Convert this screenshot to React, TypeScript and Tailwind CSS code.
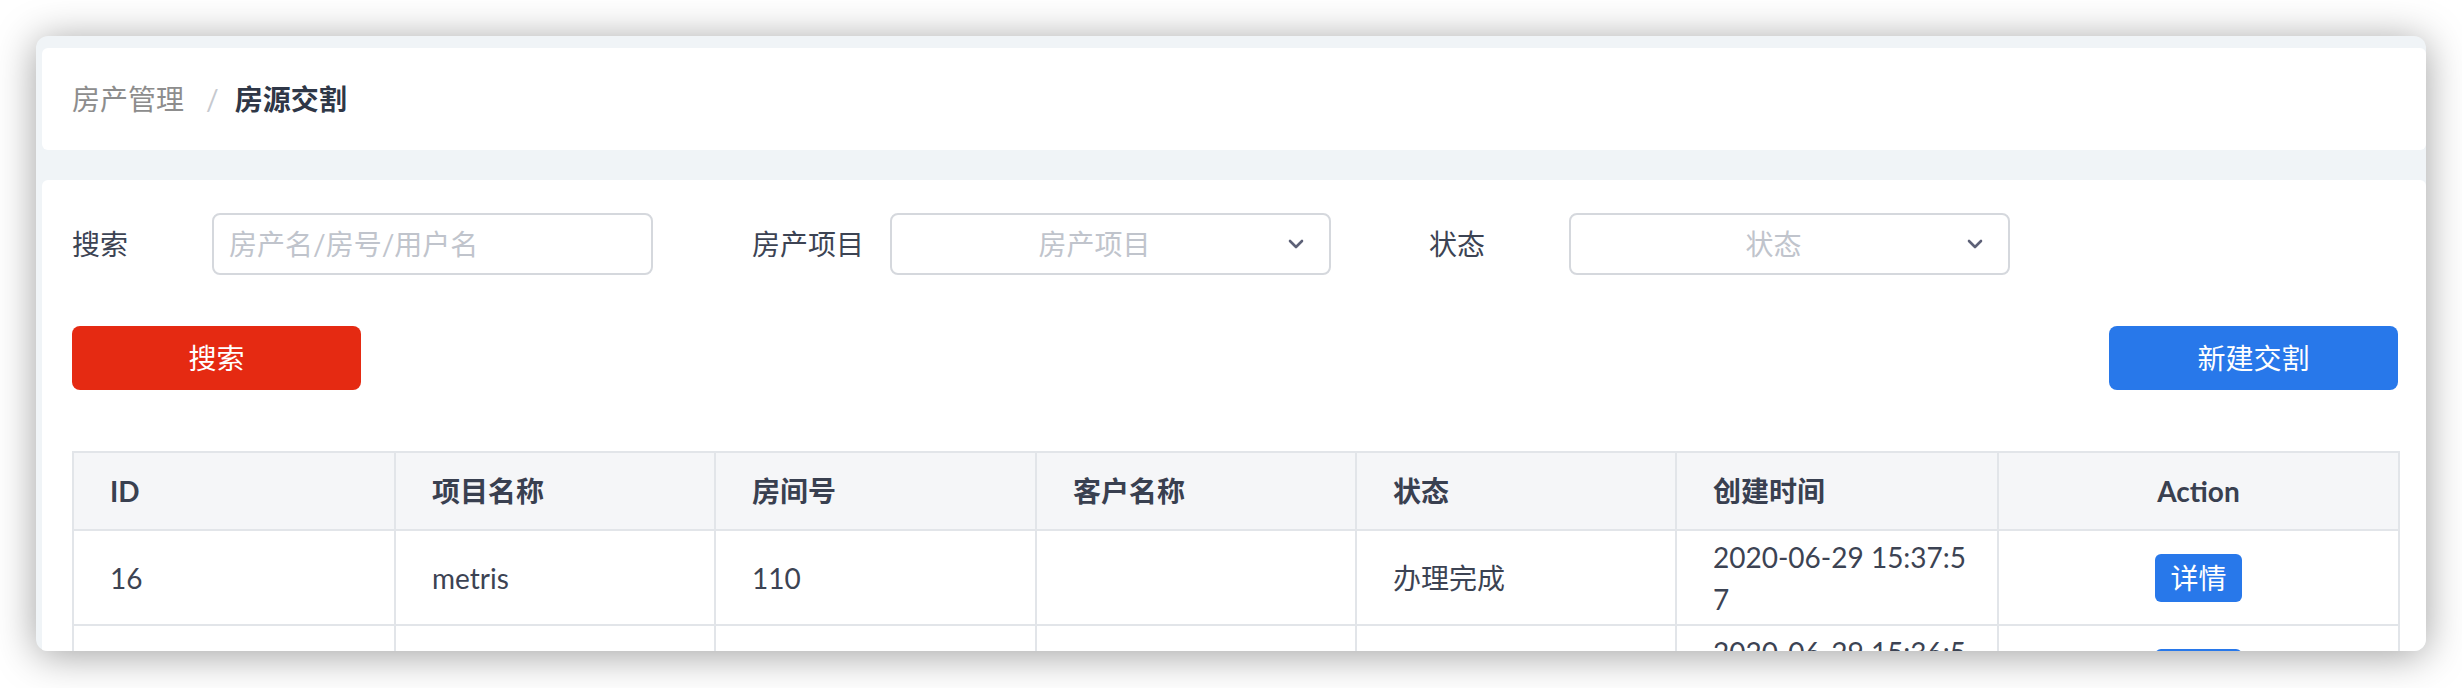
import { ChevronDown } from "lucide-react";

const FONT = "font-[family-name:Lato,'Noto_Sans_CJK_SC',sans-serif]";

// second row sits under the window edge; only the top of its date and button shows
const rows = [
  { id: "16", project: "metris", room: "110", customer: "", status: "办理完成", time: ["2020-06-29 15:37:5", "7"] },
  { id: "", project: "", room: "", customer: "", status: "", time: ["2020-06-29 15:36:5", "2"] },
];

function Select({ placeholder }: { placeholder: string }) {
  return (
    <div className="flex h-[62px] w-[441px] items-center rounded-[8px] border-2 border-[#d5d8dd] bg-white pl-[20px] pr-[21px]">
      <span className="flex-1 text-center text-[#c0c4cc]">{placeholder}</span>
      <ChevronDown size={24} strokeWidth={2.6} className="ml-[7px] text-[#5d6177]" />
    </div>
  );
}

export default function App() {
  return (
    <div className={`h-[688px] w-[2462px] overflow-hidden bg-white p-[36px] text-[28px] ${FONT}`}>
      {/* window */}
      <div className="flex h-[615px] w-[2390px] flex-col overflow-hidden rounded-[12px] bg-[#f0f4f7] pl-[6px] pt-[12px] shadow-[0_4px_40px_rgba(0,0,0,0.38)]">
        {/* breadcrumb */}
        <div className="flex h-[102px] shrink-0 items-center rounded-[6px] bg-white px-[30px]">
          <span className="text-[#8d8d8d]">房产管理</span>
          <span className="ml-[22px] mr-[16px] text-[#c6c9cf]">/</span>
          <span className="font-bold text-[#2f3747]">房源交割</span>
        </div>

        {/* main card */}
        <div className="mt-[30px] flex-1 rounded-t-[6px] bg-white pl-[30px] pr-[28px] pt-[33px] text-[#3c4353]">
          {/* filters */}
          <div className="flex items-center">
            <div className="flex w-[680px] items-center">
              <span className="w-[140px]">搜索</span>
              <div className="flex h-[62px] w-[441px] items-center rounded-[8px] border-2 border-[#d5d8dd] px-[15px] text-[#c0c4cc]">
                房产名/房号/用户名
              </div>
            </div>
            <div className="flex w-[677px] items-center">
              <span className="w-[138px]">房产项目</span>
              <Select placeholder="房产项目" />
            </div>
            <div className="flex items-center">
              <span className="w-[140px]">状态</span>
              <Select placeholder="状态" />
            </div>
          </div>

          {/* buttons */}
          <div className="mt-[51px] flex items-center justify-between">
            <button className="h-[64px] w-[289px] rounded-[8px] bg-[#e52a12] text-white">搜索</button>
            <button className="h-[64px] w-[289px] rounded-[8px] bg-[#2878ea] text-white">新建交割</button>
          </div>

          {/* table */}
          <table className="mt-[61px] w-[2326px] table-fixed border-collapse border-2 border-[#d7dbe0]">
            <colgroup>
              <col className="w-[322px]" />
              <col className="w-[320px]" />
              <col className="w-[321px]" />
              <col className="w-[320px]" />
              <col className="w-[320px]" />
              <col className="w-[322px]" />
              <col className="w-[401px]" />
            </colgroup>
            <thead>
              <tr className="h-[78px] bg-[#f5f6f8] text-left font-bold text-[#394050]">
                <th className="border-2 border-[#e2e5e9] pl-[36px]">ID</th>
                <th className="border-2 border-[#e2e5e9] pl-[36px]">项目名称</th>
                <th className="border-2 border-[#e2e5e9] pl-[36px]">房间号</th>
                <th className="border-2 border-[#e2e5e9] pl-[36px]">客户名称</th>
                <th className="border-2 border-[#e2e5e9] pl-[36px]">状态</th>
                <th className="border-2 border-[#e2e5e9] pl-[36px]">创建时间</th>
                <th className="border-2 border-[#e2e5e9] text-center">Action</th>
              </tr>
            </thead>
            <tbody>
              {rows.map((r, i) => (
                <tr key={i} className="h-[95px]">
                  <td className="border-2 border-[#e2e5e9] pl-[36px]">{r.id}</td>
                  <td className="border-2 border-[#e2e5e9] pl-[36px]">{r.project}</td>
                  <td className="border-2 border-[#e2e5e9] pl-[36px]">{r.room}</td>
                  <td className="border-2 border-[#e2e5e9] pl-[36px]">{r.customer}</td>
                  <td className="border-2 border-[#e2e5e9] pl-[36px]">{r.status}</td>
                  <td className="border-2 border-[#e2e5e9] pl-[36px] leading-[42px]">
                    <div className="whitespace-nowrap">{r.time[0]}</div>
                    <div>{r.time[1]}</div>
                  </td>
                  <td className="border-2 border-[#e2e5e9] text-center">
                    <button className="h-[48px] w-[87px] rounded-[6px] bg-[#2878ea] text-white">详情</button>
                  </td>
                </tr>
              ))}
            </tbody>
          </table>
        </div>
      </div>
    </div>
  );
}
